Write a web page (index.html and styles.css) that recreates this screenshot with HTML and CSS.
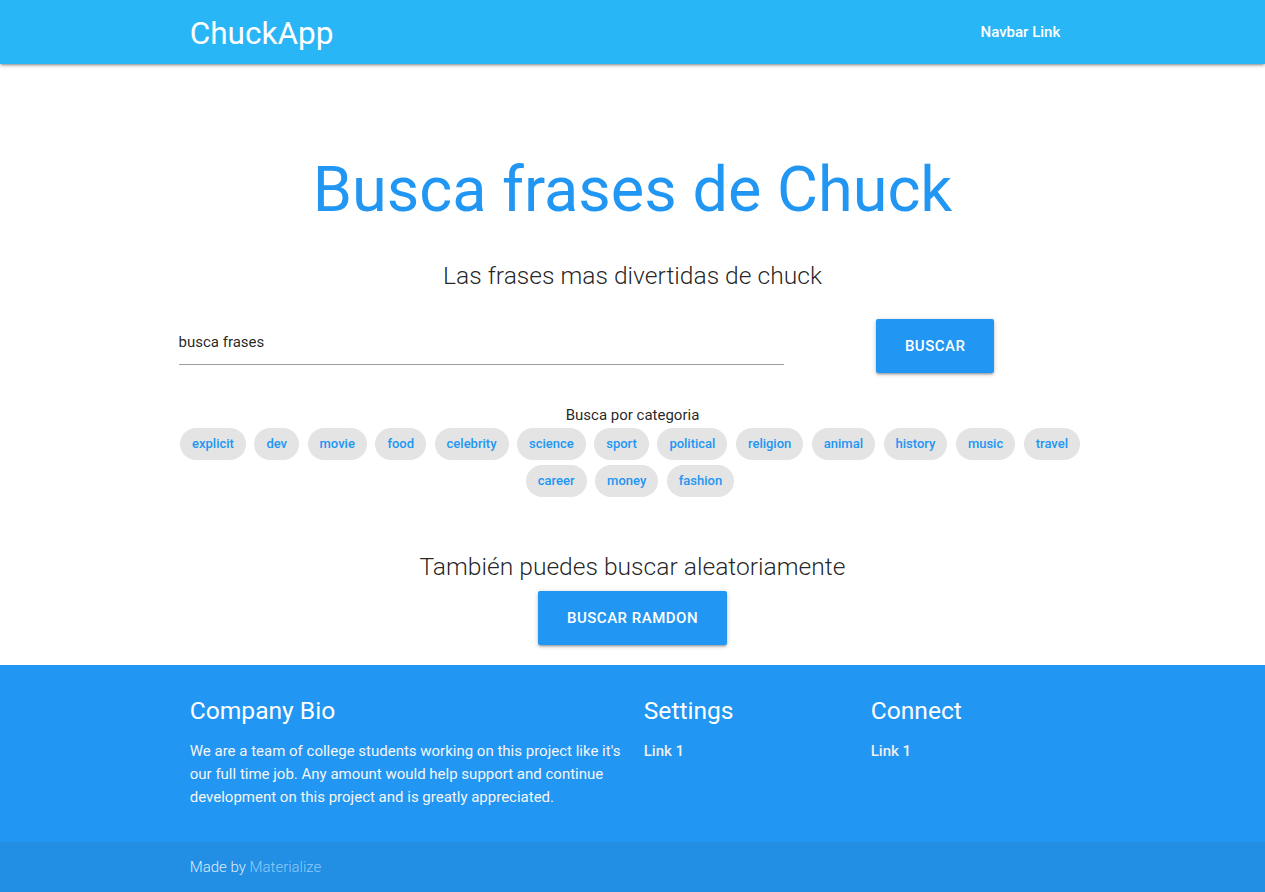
FILE: index.html
```html
<!DOCTYPE html>
<html lang="es">
<head>
<meta charset="utf-8">
<title>ChuckApp</title>
<link rel="stylesheet" href="styles.css">
</head>
<body>
<nav class="navbar">
  <div class="container nav-inner">
    <a class="brand" href="#">ChuckApp</a>
    <ul class="nav-links">
      <li><a href="#">Navbar Link</a></li>
    </ul>
  </div>
</nav>

<main class="banner">
  <div class="container">
    <h1 class="title">Busca frases de Chuck</h1>
    <h5 class="subtitle">Las frases mas divertidas de chuck</h5>

    <div class="row search-row">
      <div class="search-col">
        <input class="search-input" type="text" value="busca frases">
      </div>
      <div class="button-col">
        <a class="btn" href="#">Buscar</a>
      </div>
    </div>

    <div class="row categories">
      <p class="cat-label">Busca por categoria</p>
      <div class="chips">
        <a class="chip" href="#">explicit</a>
        <a class="chip" href="#">dev</a>
        <a class="chip" href="#">movie</a>
        <a class="chip" href="#">food</a>
        <a class="chip" href="#">celebrity</a>
        <a class="chip" href="#">science</a>
        <a class="chip" href="#">sport</a>
        <a class="chip" href="#">political</a>
        <a class="chip" href="#">religion</a>
        <a class="chip" href="#">animal</a>
        <a class="chip" href="#">history</a>
        <a class="chip" href="#">music</a>
        <a class="chip" href="#">travel</a>
        <a class="chip" href="#">career</a>
        <a class="chip" href="#">money</a>
        <a class="chip" href="#">fashion</a>
      </div>
    </div>

    <div class="random">
      <h5 class="subtitle random-title">También puedes buscar aleatoriamente</h5>
      <a class="btn" href="#">Buscar ramdon</a>
    </div>
  </div>
</main>

<footer class="page-footer">
  <div class="container">
    <div class="row footer-row">
      <div class="fcol fcol-wide">
        <h5 class="footer-title">Company Bio</h5>
        <p class="bio">We are a team of college students working on this project like it's our full time job. Any amount would help support and continue development on this project and is greatly appreciated.</p>
      </div>
      <div class="fcol">
        <h5 class="footer-title">Settings</h5>
        <ul class="flinks"><li><a href="#">Link 1</a></li></ul>
      </div>
      <div class="fcol">
        <h5 class="footer-title">Connect</h5>
        <ul class="flinks"><li><a href="#">Link 1</a></li></ul>
      </div>
    </div>
  </div>
  <div class="footer-copyright">
    <div class="container">
      Made by <a class="mat-link" href="#">Materialize</a>
    </div>
  </div>
</footer>
</body>
</html>
```

FILE: styles.css
```css
html {
  font-size: 15px;
}

body {
  margin: 0;
  font-family: Roboto, "Liberation Sans", sans-serif;
  font-weight: 400;
  font-size: 15px;
  line-height: 1.5;
  color: rgba(0, 0, 0, 0.87);
  background: #fff;
}

a {
  text-decoration: none;
}

.container {
  width: 70%;
  margin: 0 auto;
}

.row {
  margin-left: -11.25px;
  margin-right: -11.25px;
}

/* Navbar */
.navbar {
  height: 64px;
  background: #29b6f6;
  box-shadow: 0 2px 2px 0 rgba(0,0,0,.14), 0 3px 1px -2px rgba(0,0,0,.12), 0 1px 5px 0 rgba(0,0,0,.2);
  position: relative;
  z-index: 2;
}

.nav-inner {
  height: 64px;
  display: flex;
  align-items: center;
  justify-content: space-between;
}

.brand {
  color: #fff;
  font-size: 31.5px;
  line-height: 64px;
  padding-top: 3px;
}

.nav-links {
  list-style: none;
  margin: 0;
  padding: 0;
}

.nav-links a {
  display: block;
  padding: 0 15px;
  color: #fff;
  font-size: 15px;
  font-weight: 500;
  line-height: 64px;
}

/* Banner */
.banner {
  padding-top: 91px;
  padding-bottom: 20px;
}

.title {
  margin: 0;
  text-align: center;
  color: #2196f3;
  font-size: 63px;
  font-weight: 400;
  line-height: 69.3px;
}

.subtitle {
  margin: 38px 0 0;
  text-align: center;
  font-size: 24.6px;
  font-weight: 300;
  line-height: 27px;
}

.search-row {
  display: flex;
  align-items: flex-start;
  margin-top: 30px;
}

.search-col {
  flex: 0 0 66.6667%;
}

.search-input {
  display: block;
  box-sizing: content-box;
  width: 100%;
  height: 45px;
  margin: 0 0 8px;
  padding: 0;
  border: none;
  border-bottom: 1px solid #9e9e9e;
  border-radius: 0;
  outline: none;
  background: transparent;
  font-family: Roboto, "Liberation Sans", sans-serif;
  font-size: 15px;
  color: rgba(0, 0, 0, 0.87);
}

.button-col {
  flex: 1;
  display: flex;
  justify-content: center;
}

.btn {
  display: inline-block;
  height: 54px;
  line-height: 54px;
  padding: 0 29px;
  background: #2196f3;
  color: #fff;
  border-radius: 2px;
  font-size: 15px;
  font-weight: 500;
  text-transform: uppercase;
  letter-spacing: .5px;
  box-shadow: 0 2px 2px 0 rgba(0,0,0,.14), 0 3px 1px -2px rgba(0,0,0,.12), 0 1px 5px 0 rgba(0,0,0,.2);
}

.categories {
  margin-top: 31px;
  text-align: center;
}

.cat-label {
  margin: 0;
  font-size: 15px;
  line-height: 22px;
}

.chips {
  display: flex;
  flex-wrap: wrap;
  justify-content: center;
  column-gap: 3.5px;
  row-gap: 5px;
  margin-top: 2px;
}

.chip {
  display: inline-block;
  height: 32px;
  line-height: 32px;
  padding: 0 12px;
  margin-right: 5px;
  border-radius: 16px;
  background: #e4e4e4;
  color: #2196f3;
  font-size: 13px;
  font-weight: 500;
}

.random {
  margin-top: 56px;
  text-align: center;
}

.random-title {
  margin: 0 0 11px;
}

/* Footer */
.page-footer {
  background: #2196f3;
  color: #fff;
  padding-top: 20px;
}

.footer-row {
  display: flex;
  margin-bottom: 0;
  padding-bottom: 18px;
}

.fcol {
  flex: 0 0 25%;
  box-sizing: border-box;
  padding: 0 11.25px;
}

.fcol-wide {
  flex: 0 0 50%;
}

.footer-title {
  margin: 11px 0 0;
  font-size: 24.6px;
  font-weight: 400;
  line-height: 30px;
  color: #fff;
}

.bio {
  margin: 14px 0 15px;
  color: #f5f5f5;
  font-size: 15px;
  font-weight: 400;
  line-height: 23px;
}

.flinks {
  list-style: none;
  margin: 14px 0 0;
  padding: 0;
  line-height: 23px;
}

.flinks a {
  color: #eeeeee;
  font-weight: 500;
}

.footer-copyright {
  background: rgba(51, 51, 51, 0.08);
  height: 50px;
  display: flex;
  align-items: center;
  color: rgba(255, 255, 255, 0.85);
  font-weight: 300;
}

.footer-copyright .container {
  line-height: 22px;
}

.mat-link {
  color: #90caf9;
}
```
